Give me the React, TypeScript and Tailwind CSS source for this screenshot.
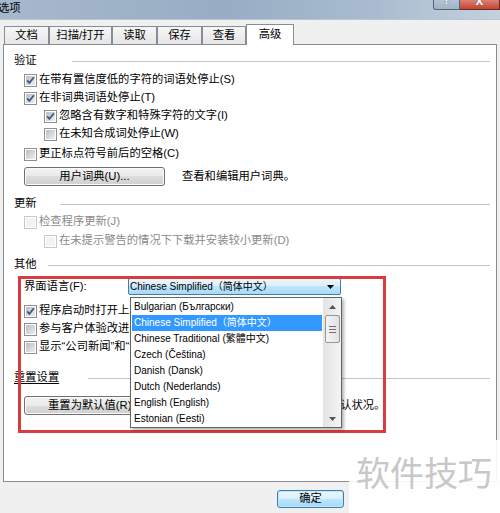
import React from "react";

function Box({ checked, disabled }: { checked?: boolean; disabled?: boolean }) {
  return (
    <span
      className={
        disabled
          ? "relative w-[13px] h-[13px] shrink-0 border border-[#c9c9c9] bg-white flex items-center justify-center"
          : "relative w-[13px] h-[13px] shrink-0 border border-[#8e8f8f] bg-white flex items-center justify-center"
      }
    >
      <span
        className={
          disabled
            ? "w-[9px] h-[9px] bg-[#f3f3f3]"
            : "w-[9px] h-[9px] bg-[linear-gradient(135deg,#b9bec4,#eeeeef)]"
        }
      />
      {checked && (
        <svg className="absolute left-[-1px] top-[-1px]" width="13" height="13" viewBox="0 0 13 13">
          <path d="M3.2 6.4 L5.4 8.9 L9.9 3.2" fill="none" stroke="#3d5290" strokeWidth="1.7" />
        </svg>
      )}
    </span>
  );
}

function Row({
  children,
  checked,
  disabled,
  indent,
  extra,
}: {
  children: React.ReactNode;
  checked?: boolean;
  disabled?: boolean;
  indent?: boolean;
  extra?: string;
}) {
  return (
    <div className={`flex items-center h-[18px] whitespace-nowrap ${indent ? "pl-[30px]" : "pl-[10px]"} ${extra ?? ""}`}>
      <Box checked={checked} disabled={disabled} />
      <span className={disabled ? "ml-[2px] text-[#8a8a8a]" : "ml-[2px]"}>{children}</span>
    </div>
  );
}

function Heading({ text, gap, extra, underline }: { text: string; gap: string; extra?: string; underline?: boolean }) {
  return (
    <div className={`flex items-center h-[18px] ${extra ?? ""}`}>
      <span className={underline ? "underline underline-offset-2" : ""}>{text}</span>
      <div className={`flex-1 h-px bg-[#c4c4c4] ${gap}`} />
    </div>
  );
}

function Btn({ children, extra }: { children: React.ReactNode; extra?: string }) {
  return (
    <div
      className={`h-[19px] rounded-[3px] border border-[#707070] bg-[linear-gradient(#f2f2f2,#ebebeb_50%,#dddddd_50%,#cfcfcf)] shadow-[inset_0_0_0_1px_#fbfbfb] flex items-center justify-center whitespace-nowrap ${extra ?? ""}`}
    >
      {children}
    </div>
  );
}

const langs = [
  "Bulgarian (Български)",
  "Chinese Simplified（简体中文）",
  "Chinese Traditional (繁體中文)",
  "Czech (Čeština)",
  "Danish (Dansk)",
  "Dutch (Nederlands)",
  "English (English)",
  "Estonian (Eesti)",
];

export default function App() {
  return (
    <div className="relative w-[500px] h-[513px] overflow-hidden bg-[#f0f0f0] text-black text-[11.3px] leading-none font-['Liberation_Sans','Noto_Sans_CJK_SC',sans-serif]">
      {/* title bar */}
      <div className="h-[20px] flex items-start bg-[linear-gradient(90deg,#a6b8cc,#98adc4_45%,#a9bccf_75%,#c3d1dd)] border-b border-[#b8c6d4]">
        <span className="ml-[-2px] mt-[3px]">选项</span>
        <div className="ml-auto flex items-start">
          <div className="relative w-[27px] h-[10px] border border-t-0 border-[#52647c] rounded-bl-[3px] bg-[linear-gradient(#b4c3d3,#a2b3c6)] overflow-hidden flex justify-center">
            <span className="mt-[-7px] text-[13px] font-bold text-white [text-shadow:0_0_1px_#333]">?</span>
          </div>
          <div className="relative w-[40px] h-[10px] border border-t-0 border-l-0 border-[#6e2a22] bg-[linear-gradient(#d98272,#c4432f)] overflow-hidden flex justify-center">
            <span className="mt-[-7px] text-[14px] font-bold text-white [text-shadow:0_0_1px_#333]">x</span>
          </div>
        </div>
      </div>

      {/* tabs */}
      <div className="flex items-end pl-[4px] mt-[4px] h-[20px]">
        {[
          ["文档", "w-[45px]"],
          ["扫描/打开", "w-[63px]"],
          ["读取", "w-[45px]"],
          ["保存", "w-[45px]"],
          ["查看", "w-[44px]"],
        ].map(([t, w]) => (
          <div
            key={t}
            className={`${w} h-[18px] border border-b-0 border-[#898c95] bg-[linear-gradient(#f6f6f6,#e6e6e6)] flex items-center justify-center`}
          >
            {t}
          </div>
        ))}
        <div className="relative z-10 w-[48px] h-[21px] mb-[-1px] border border-b-0 border-[#898c95] bg-white flex items-center justify-center pb-[1px]">
          高级
        </div>
      </div>

      {/* panel */}
      <div className="ml-[3px] w-[494px] h-[438px] bg-white border border-[#898c95] pl-[10px] pr-[6px] pt-[7px] flex flex-col">
        <Heading text="验证" gap="ml-[35px]" />
        <Row checked extra="mt-[1px]">在带有置信度低的字符的词语处停止(S)</Row>
        <Row checked>在非词典词语处停止(T)</Row>
        <Row checked indent>忽略含有数字和特殊字符的文字(I)</Row>
        <Row indent>在未知合成词处停止(W)</Row>
        <Row extra="mt-[2px]">更正标点符号前后的空格(C)</Row>
        <div className="flex items-center h-[19px] mt-[4px] pl-[10px]">
          <Btn extra="w-[141px]">用户词典(U)...</Btn>
          <span className="ml-[17px]">查看和编辑用户词典。</span>
        </div>

        <Heading text="更新" gap="ml-[23px]" extra="mt-[9px]" />
        <Row disabled>检查程序更新(J)</Row>
        <Row disabled indent extra="mt-[1px]">在未提示警告的情况下下载并安装较小更新(D)</Row>

        <Heading text="其他" gap="ml-[11px]" extra="mt-[6px]" />
        <div className="flex items-center h-[19px] mt-[3px]">
          <span className="w-[114px] pl-[10px] whitespace-nowrap">界面语言(F):</span>
          <div className="w-[213px] h-[17px] rounded-[2px] border border-[#3c7fb1] bg-[linear-gradient(#eaf6fd,#d9f0fc_50%,#bee6fd_50%,#a7d9f5)] flex items-center pl-[1px] pr-[6px] text-[10px] whitespace-nowrap">
            <span>Chinese Simplified（简体中文）</span>
            <svg className="ml-auto" width="7" height="4" viewBox="0 0 7 4">
              <path d="M0 0 H7 L3.5 4 Z" fill="#000" />
            </svg>
          </div>
        </div>
        <Row checked extra="mt-[6px]">程序启动时打开上次使用的文件</Row>
        <Row>参与客户体验改进计划(V)</Row>
        <Row>显示“公司新闻”和“帮助”</Row>

        <Heading text="重置设置" gap="ml-[29px]" extra="mt-[13px]" underline />
        <div className="flex items-center h-[19px] mt-[9px] pl-[10px] whitespace-nowrap">
          <Btn extra="w-[141px]">重置为默认值(R)...</Btn>
          <span className="ml-[17px]">将所有的选项设置都重置为其默认状况。</span>
        </div>
      </div>

      {/* bottom bar */}
      <div className="flex pl-[277px] pt-[8px]">
        <div className="w-[67px] h-[18px] rounded-[3px] border border-[#3c7fb1] bg-[linear-gradient(#eaf6fd,#d9f0fc_50%,#bee6fd_50%,#a7d9f5)] shadow-[inset_0_0_0_1px_#c4e5f6] flex items-center justify-center">
          确定
        </div>
      </div>

      {/* red annotation box */}
      <div className="absolute left-[18px] top-[276px] w-[368px] h-[157px] border-[3px] border-[#d83c3c] pointer-events-none z-20" />

      {/* dropdown list */}
      <div className="absolute left-[130px] top-[297px] w-[212px] h-[131px] bg-white border border-[#646464] shadow-[2px_2px_3px_rgba(0,0,0,0.3)] flex z-30 text-[10px]">
        <div className="w-[192px] flex flex-col pt-[1px]">
          {langs.map((l, i) => (
            <div
              key={l}
              className={
                i === 1
                  ? "h-[16px] mx-[1px] pl-[2px] flex items-center bg-[#3399ff] text-white whitespace-nowrap"
                  : "h-[16px] mx-[1px] pl-[2px] flex items-center whitespace-nowrap"
              }
            >
              {l}
            </div>
          ))}
        </div>
        <div className="flex-1 bg-[linear-gradient(90deg,#e3e3e3,#f4f4f4)] flex flex-col items-center">
          <div className="h-[17px] flex items-center justify-center">
            <svg width="7" height="4" viewBox="0 0 7 4">
              <path d="M0 4 H7 L3.5 0 Z" fill="#555" />
            </svg>
          </div>
          <div className="w-[15px] h-[28px] rounded-[2px] border border-[#979797] bg-[linear-gradient(90deg,#f4f4f4,#e2e2e2)] flex flex-col items-center justify-center gap-[2px]">
            <div className="w-[7px] h-px bg-[#707070]" />
            <div className="w-[7px] h-px bg-[#707070]" />
            <div className="w-[7px] h-px bg-[#707070]" />
          </div>
          <div className="mt-auto h-[17px] flex items-center justify-center">
            <svg width="7" height="4" viewBox="0 0 7 4">
              <path d="M0 0 H7 L3.5 4 Z" fill="#555" />
            </svg>
          </div>
        </div>
      </div>

      {/* watermark */}
      <div className="absolute left-[349px] top-[440px] w-[151px] h-[73px] bg-white/90 z-40">
        <span className="absolute left-[7px] top-[15px] text-[34px] leading-none text-[#c8c8c8] font-['Noto_Sans_CJK_SC',sans-serif] whitespace-nowrap">
          软件技巧
        </span>
      </div>
    </div>
  );
}
